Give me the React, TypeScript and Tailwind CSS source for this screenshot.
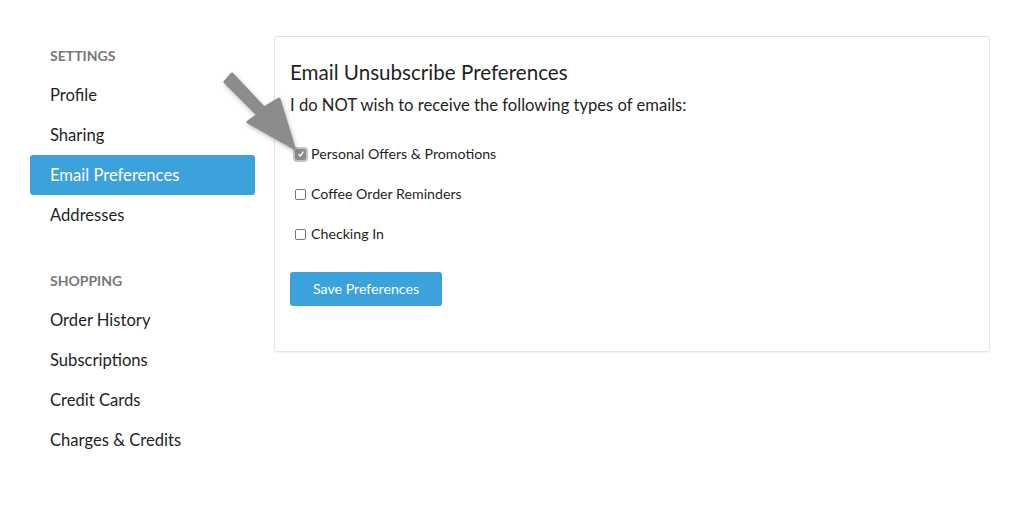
import { useState } from "react";

const settingsLinks = ["Profile", "Sharing", "Email Preferences", "Addresses"];
const shoppingLinks = ["Order History", "Subscriptions", "Credit Cards", "Charges & Credits"];

const options = [
  { label: "Personal Offers & Promotions", checked: true },
  { label: "Coffee Order Reminders", checked: false },
  { label: "Checking In", checked: false }
];

const NavGroup = ({ title, links }: { title: string; links: string[] }) => (
  <div>
    <div className="h-10 flex items-center pl-5 text-[14px] font-bold text-[#777] uppercase">
      {title}
    </div>
    <ul>
      {links.map((link) => (
        <li
          key={link}
          className={
            link === "Email Preferences"
              ? "h-10 flex items-center pl-5 rounded-[3px] bg-[#3ba2db] text-white text-[16.6px]"
              : "h-10 flex items-center pl-5 text-[16.6px] text-[#1f1f1f]"
          }
        >
          {link}
        </li>
      ))}
    </ul>
  </div>
);

const Checkbox = ({ checked, onChange }: { checked: boolean; onChange: () => void }) =>
  checked ? (
    <span
      onClick={onChange}
      className="w-[15px] h-[15px] rounded-[4px] bg-[#c4c4c4] flex items-center justify-center"
    >
      <span className="w-[11px] h-[11px] rounded-[2px] bg-[#8a8a8a] flex items-center justify-center">
        <svg width="8" height="8" viewBox="0 0 8 8">
          <path d="M1.5 4.2 L3.2 6 L6.5 1.6" stroke="white" strokeWidth="1.3" fill="none" />
        </svg>
      </span>
    </span>
  ) : (
    <span onClick={onChange} className="w-[15px] h-[15px] flex items-center justify-center">
      <span className="w-[11px] h-[11px] rounded-[2px] border border-[#777] bg-white" />
    </span>
  );

export default function App() {
  const [checked, setChecked] = useState(options.map((o) => o.checked));

  return (
    <div className="relative w-[1025px] h-[508px] bg-white font-['Lato',sans-serif] text-[#1f1f1f]">
      <div className="flex pt-[35px] pl-[30px] pr-[35px] gap-[19px]">
        <aside className="w-[225px] flex flex-col gap-[25px]">
          <NavGroup title="Settings" links={settingsLinks} />
          <NavGroup title="Shopping" links={shoppingLinks} />
        </aside>

        <main className="flex-1 mt-px h-[316px] border border-[#e3e3e3] rounded-[3px] shadow-[0_1px_2px_rgba(0,0,0,0.06)] px-[15px] pt-[22px]">
          <h2 className="text-[20.6px] leading-[26px]">Email Unsubscribe Preferences</h2>
          <p className="mt-[10px] text-[16.6px] leading-[20px]">
            I do NOT wish to receive the following types of emails:
          </p>

          <div className="mt-[19px] flex flex-col">
            {options.map((opt, i) => (
              <label key={opt.label} className="h-10 flex items-center gap-[3px] pl-[3px] text-[14.2px]">
                <Checkbox
                  checked={checked[i]}
                  onChange={() => setChecked(checked.map((c, j) => (j === i ? !c : c)))}
                />
                {opt.label}
              </label>
            ))}
          </div>

          <button className="mt-[18px] w-[152px] h-[34px] rounded-[3px] bg-[#3ba2db] text-white text-[14.2px]">
            Save Preferences
          </button>
        </main>
      </div>

      <svg
        className="absolute left-0 top-0 pointer-events-none"
        width="320"
        height="170"
        style={{ filter: "drop-shadow(1px 2px 2px rgba(0,0,0,0.28))" }}
      >
        <polygon
          points="232,74 264,108 279,99 294,148 248,122 258,115 225,82"
          fill="#8c8c8c"
          stroke="#8c8c8c"
          strokeWidth="3"
          strokeLinejoin="round"
        />
      </svg>
    </div>
  );
}
